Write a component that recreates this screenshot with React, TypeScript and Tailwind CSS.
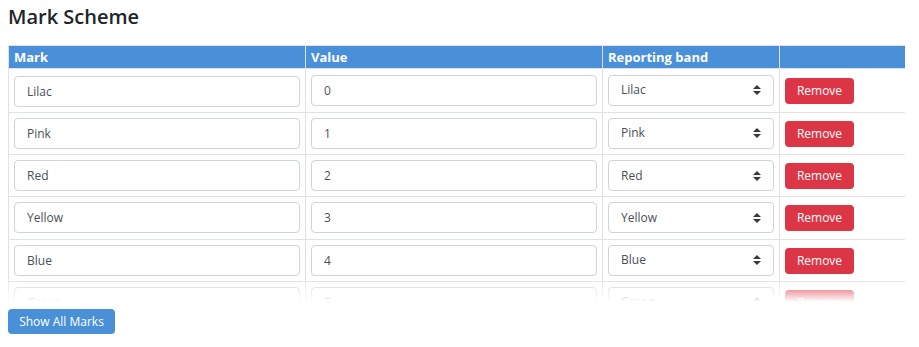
import React, { useState } from "react";

type Mark = { name: string; value: string; band: string };

const bands = ["Lilac", "Pink", "Red", "Yellow", "Blue", "Green"];

const initialMarks: Mark[] = [
  { name: "Lilac", value: "0", band: "Lilac" },
  { name: "Pink", value: "1", band: "Pink" },
  { name: "Red", value: "2", band: "Red" },
  { name: "Yellow", value: "3", band: "Yellow" },
  { name: "Blue", value: "4", band: "Blue" },
  { name: "Green", value: "5", band: "Green" },
];

const font = { fontFamily: '"Open Sans", "Noto Sans", sans-serif' };

const SelectArrows: React.FC = () => (
  <svg
    className="pointer-events-none absolute right-[13px] top-1/2 -translate-y-1/2"
    width="8"
    height="10"
    viewBox="0 0 4 5"
  >
    <path fill="#343a40" d="M2 0L0 2h4zm0 5L0 3h4z" />
  </svg>
);

const App: React.FC = () => {
  const [marks, setMarks] = useState<Mark[]>(initialMarks);
  const [showAll, setShowAll] = useState<boolean>(false);

  const updateMark = (i: number, field: keyof Mark, value: string) => {
    setMarks((prev) =>
      prev.map((m, idx) => (idx === i ? { ...m, [field]: value } : m))
    );
  };

  const removeMark = (i: number) => {
    setMarks((prev) => prev.filter((_, idx) => idx !== i));
  };

  return (
    <div className="bg-white min-h-screen px-[8px] pt-[5px] text-[#212529]" style={font}>
      <h4 className="text-[20px] leading-[24px] font-semibold mb-[16px]">
        Mark Scheme
      </h4>

      {/* Table with fade at the bottom */}
      <div
        className={`relative w-[897px] overflow-hidden ${
          showAll ? "" : "h-[257px]"
        }`}
      >
        <table className="w-[897px] border-collapse table-fixed">
          <colgroup>
            <col className="w-[297px]" />
            <col className="w-[297px]" />
            <col className="w-[177px]" />
            <col className="w-[126px]" />
          </colgroup>
          <thead>
            <tr className="bg-[#4a90d9] text-white text-[13px] font-bold text-left">
              <th className="h-[23px] px-[5px] py-0 border border-[#dee2e6] leading-none">
                Mark
              </th>
              <th className="h-[23px] px-[5px] py-0 border border-[#dee2e6] leading-none">
                Value
              </th>
              <th className="h-[23px] px-[5px] py-0 border border-[#dee2e6] leading-none">
                Reporting band
              </th>
              <th className="h-[23px] px-[5px] py-0 border border-[#dee2e6]"></th>
            </tr>
          </thead>
          <tbody>
            {marks.map((m, i) => (
              <tr key={i}>
                <td
                  className={`border border-[#dee2e6] px-[5px] pb-[5.25px] align-middle ${
                    i === 0 ? "pt-[6.5px]" : "pt-[5px]"
                  }`}
                >
                  <input
                    type="text"
                    value={m.name}
                    onChange={(e) => updateMark(i, "name", e.target.value)}
                    className="block w-full h-[31px] px-[12px] text-[12px] text-[#495057] border border-[#ced4da] rounded-[4px] outline-none"
                  />
                </td>
                <td className="border border-[#dee2e6] px-[5px] align-middle">
                  <input
                    type="text"
                    value={m.value}
                    onChange={(e) => updateMark(i, "value", e.target.value)}
                    className="block w-full h-[31px] px-[12px] text-[12px] text-[#495057] border border-[#ced4da] rounded-[4px] outline-none"
                  />
                </td>
                <td className="border border-[#dee2e6] px-[5px] align-middle">
                  <div className="relative">
                    <select
                      value={m.band}
                      onChange={(e) => updateMark(i, "band", e.target.value)}
                      className="block w-full h-[31px] pl-[12px] pr-[28px] text-[12px] text-[#495057] bg-white border border-[#ced4da] rounded-[4px] appearance-none outline-none"
                    >
                      {bands.map((b) => (
                        <option key={b} value={b}>
                          {b}
                        </option>
                      ))}
                    </select>
                    <SelectArrows />
                  </div>
                </td>
                <td className="border border-[#dee2e6] px-[5px] align-middle">
                  <button
                    onClick={() => removeMark(i)}
                    className="w-[69px] h-[26px] bg-[#dc3545] text-white text-[12px] rounded-[4px]"
                  >
                    Remove
                  </button>
                </td>
              </tr>
            ))}
          </tbody>
        </table>
        {!showAll && (
          <div className="pointer-events-none absolute left-0 right-0 bottom-0 h-[24px] bg-gradient-to-b from-white/0 to-white" />
        )}
      </div>

      <button
        onClick={() => setShowAll((s) => !s)}
        className="mt-[7px] w-[107px] h-[25px] bg-[#4a90d9] text-white text-[12px] rounded-[4px]"
      >
        {showAll ? "Hide Marks" : "Show All Marks"}
      </button>
    </div>
  );
};

export default App;
